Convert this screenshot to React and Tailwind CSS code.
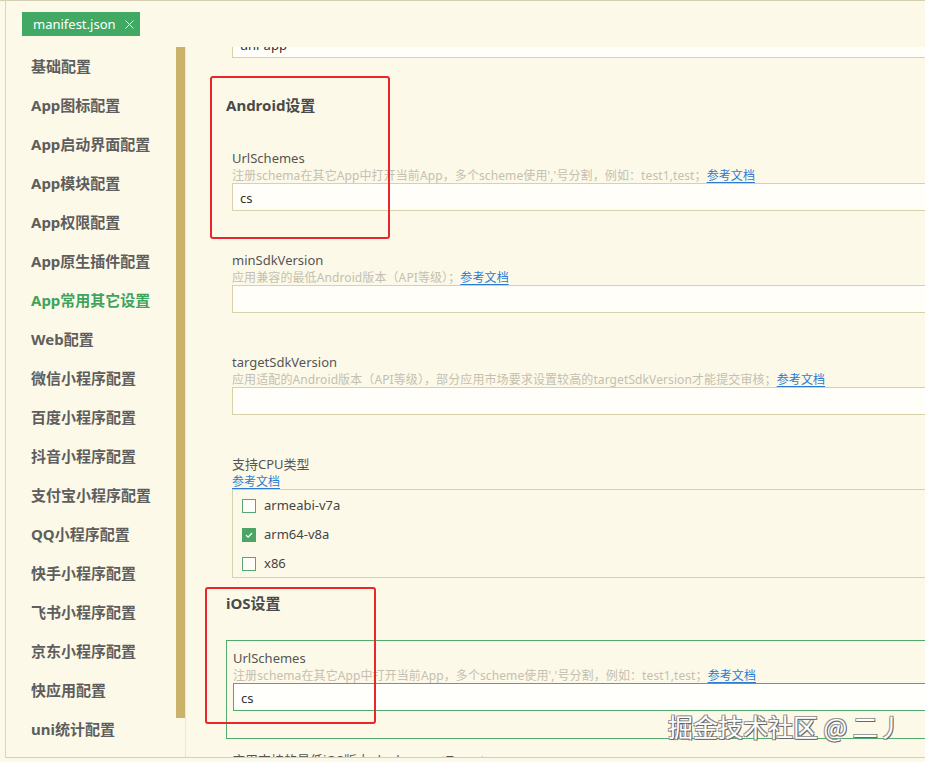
import React from "react";

const navItems = [
  "基础配置",
  "App图标配置",
  "App启动界面配置",
  "App模块配置",
  "App权限配置",
  "App原生插件配置",
  "App常用其它设置",
  "Web配置",
  "微信小程序配置",
  "百度小程序配置",
  "抖音小程序配置",
  "支付宝小程序配置",
  "QQ小程序配置",
  "快手小程序配置",
  "飞书小程序配置",
  "京东小程序配置",
  "快应用配置",
  "uni统计配置",
];

function Link() {
  return <span className="text-[#2b7bd1] underline underline-offset-2">参考文档</span>;
}

function Field({ label, desc, value, first }) {
  return (
    <div className={first ? "mt-[33px]" : "mt-[40px]"}>
      <div className="h-[17px] leading-[17px] pt-[1px] text-[13px] text-[#555]">{label}</div>
      <div className="h-[17px] leading-[17px] pt-[1px] text-[12px] text-[#c4c0b1] whitespace-nowrap tracking-[0.1px]">
        {desc}
        <Link />
      </div>
      <div className="h-[28px] border border-[#d8d2aa] bg-[#fffef8] flex items-center pl-[7px] pt-[4px] text-[13px] text-[#333]">
        {value}
      </div>
    </div>
  );
}

function Check({ checked, label }) {
  return (
    <div className="h-[29px] flex items-center pl-[9px] pt-[2px]">
      {checked ? (
        <span className="w-[14px] h-[14px] bg-[#4ca466] flex items-center justify-center">
          <svg width="10" height="10" viewBox="0 0 10 10">
            <polyline points="2,5.2 4.2,7.2 8,3" fill="none" stroke="#fff" strokeWidth="1.3" />
          </svg>
        </span>
      ) : (
        <span className="w-[14px] h-[14px] border border-[#5aa573] bg-[#fffef8]" />
      )}
      <span className="ml-[8px] text-[13px] text-[#444]">{label}</span>
    </div>
  );
}

export default function App() {
  return (
    <div className="w-[925px] h-[762px] overflow-hidden relative bg-[#fdf9e8] border-t border-[#d5d0b4] flex flex-col font-['Noto_Sans','Noto_Sans_CJK_SC',sans-serif]">
      <div className="ml-[5px] border-l border-[#dcd6b8] flex flex-col">
        {/* tab row */}
        <div className="h-[46px] shrink-0">
          <div className="ml-[16px] mt-[11px] w-[118px] h-[24px] bg-[#41a964] flex items-center pl-[11px] pt-[1px] text-white text-[13px]">
            <span>manifest.json</span>
            <svg className="ml-[9px]" width="9" height="9" viewBox="0 0 9 9">
              <path d="M0.5 0.5 L8.5 8.5 M8.5 0.5 L0.5 8.5" stroke="#eaf6ee" strokeWidth="1" />
            </svg>
          </div>
        </div>
        {/* main */}
        <div className="h-[711px] border-b border-[#d5d0b4] flex">
          <div className="w-[170px] shrink-0 flex flex-col">
            {navItems.map((t) => (
              <div
                key={t}
                className={
                  "h-[39px] shrink-0 flex items-center pl-[25px] text-[15px] font-bold " +
                  (t === "App常用其它设置" ? "text-[#3da35d]" : "text-[#5e5e5e]")
                }
              >
                {t}
              </div>
            ))}
          </div>
          <div className="w-[10px] shrink-0 border-r border-[#efe8cb]">
            <div className="w-[9px] h-[671px] bg-[#cbb26b]" />
          </div>
          <div className="flex-1 overflow-hidden">
            <div className="w-[760px] pl-[40px]">
              <div className="ml-[6px] mt-[-17px] h-[28px] border border-[#d8d2aa] bg-[#fffef8] flex items-center pl-[7px] pt-[4px] text-[13px] text-[#333]">
                uni-app
              </div>
              <div className="mt-[36px] h-[22px] leading-[22px] text-[15px] font-bold text-[#4a4a4a]">Android设置</div>
              <div className="ml-[6px]">
                <Field
                  first
                  label="UrlSchemes"
                  desc="注册schema在其它App中打开当前App，多个scheme使用','号分割，例如：test1,test；"
                  value="cs"
                />
                <Field label="minSdkVersion" desc="应用兼容的最低Android版本（API等级）；" value="" />
                <Field
                  label="targetSdkVersion"
                  desc="应用适配的Android版本（API等级），部分应用市场要求设置较高的targetSdkVersion才能提交审核；"
                  value=""
                />
                <div className="mt-[40px]">
                  <div className="h-[17px] leading-[17px] pt-[1px] text-[13px] text-[#555]">支持CPU类型</div>
                  <div className="h-[17px] leading-[17px] pt-[1px] text-[12px]">
                    <Link />
                  </div>
                  <div className="border border-[#d8d2aa]">
                    <Check label="armeabi-v7a" />
                    <Check checked label="arm64-v8a" />
                    <Check label="x86" />
                  </div>
                </div>
              </div>
              <div className="mt-[14px] h-[22px] leading-[22px] text-[15px] font-bold text-[#4a4a4a]">iOS设置</div>
              <div className="mt-[26px] border border-[#52aa6f] pl-[6px] pt-[8px] pb-[27px]">
                <div className="h-[17px] leading-[17px] pt-[1px] text-[13px] text-[#555]">UrlSchemes</div>
                <div className="h-[17px] leading-[17px] pt-[1px] text-[12px] text-[#c4c0b1] whitespace-nowrap tracking-[0.1px]">
                  注册schema在其它App中打开当前App，多个scheme使用','号分割，例如：test1,test；
                  <Link />
                </div>
                <div className="h-[28px] border border-[#52aa6f] bg-[#fffffb] flex items-center pl-[7px] pt-[4px] text-[13px] text-[#333]">
                  cs
                </div>
              </div>
              <div className="ml-[6px] mt-[13px] h-[17px] leading-[17px] text-[13px] text-[#555]">
                应用支持的最低iOS版本 deploymentTarget
              </div>
            </div>
          </div>
        </div>
      </div>

      {/* annotation boxes */}
      <div className="absolute left-[210px] top-[75px] w-[180px] h-[163px] border-2 border-[#e8262b] rounded-[3px]" />
      <div className="absolute left-[205px] top-[586px] w-[171px] h-[137px] border-2 border-[#e8262b] rounded-[3px]" />

      {/* watermark */}
      <div className="absolute left-[668px] top-[709px] text-[25px] leading-[32px] text-white whitespace-nowrap font-['Noto_Sans_CJK_SC',sans-serif] [text-shadow:1px_1px_0_#666,-1px_-1px_0_#999,1px_-1px_0_#888,-1px_1px_0_#888]">
        掘金技术社区 @ 二丿
      </div>
    </div>
  );
}
